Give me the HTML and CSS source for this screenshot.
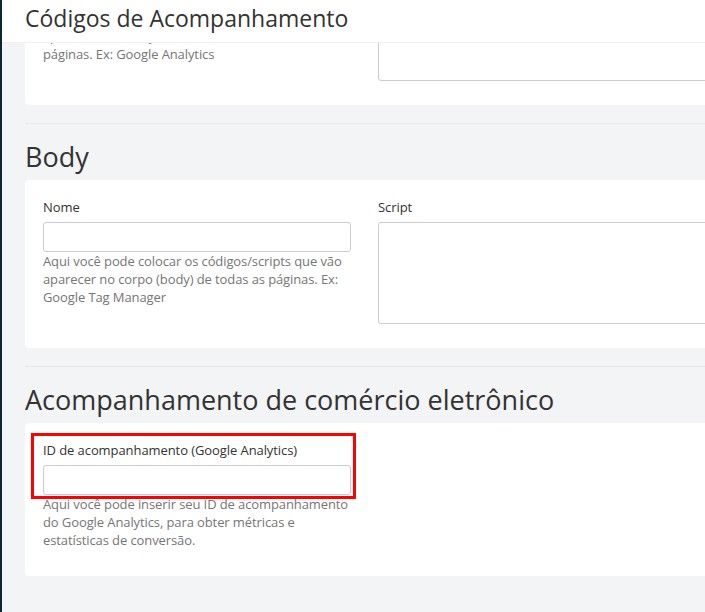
FILE: index.html
```html
<!DOCTYPE html>
<html lang="pt-BR">
<head>
<meta charset="utf-8">
<title>Códigos de Acompanhamento</title>
<link rel="stylesheet" href="styles.css">
</head>
<body>
<div class="layout">
  <aside class="sidebar"></aside>
  <main class="main">
    <header class="topbar">
      <h1 class="topbar-title">Códigos de Acompanhamento</h1>
    </header>
    <div class="content">
      <section class="card card-head">
        <div class="grid">
          <div class="field">
            <label class="label">Nome</label>
            <input class="input" type="text">
            <p class="help">Aqui você pode colocar os códigos/scripts que vão aparecer no cabeçalho (header) de todas as páginas. Ex: Google Analytics</p>
          </div>
          <div class="field">
            <label class="label">Script</label>
            <textarea class="textarea"></textarea>
          </div>
        </div>
      </section>

      <section class="section">
        <h2 class="section-title">Body</h2>
        <div class="card card-body">
          <div class="grid">
            <div class="field">
              <label class="label">Nome</label>
              <input class="input" type="text">
              <p class="help">Aqui você pode colocar os códigos/scripts que vão aparecer no corpo (body) de todas as páginas. Ex: Google Tag Manager</p>
            </div>
            <div class="field">
              <label class="label">Script</label>
              <textarea class="textarea"></textarea>
            </div>
          </div>
        </div>
      </section>

      <section class="section">
        <h2 class="section-title">Acompanhamento de comércio eletrônico</h2>
        <div class="card card-ecom">
          <div class="grid">
            <div class="field highlighted">
              <span class="highlight"></span>
              <label class="label">ID de acompanhamento (Google Analytics)</label>
              <input class="input" type="text">
              <p class="help">Aqui você pode inserir seu ID de acompanhamento do Google Analytics, para obter métricas e estatísticas de conversão.</p>
            </div>
          </div>
        </div>
      </section>
    </div>
  </main>
</div>
</body>
</html>
```
FILE: styles.css
```css
* { box-sizing: border-box; }
html, body {
  margin: 0;
  padding: 0;
  height: 100%;
  overflow: hidden;
}
body {
  font-family: "Open Sans", "Liberation Sans", sans-serif;
  color: #333;
  background: #f3f4f6;
}
.layout {
  display: flex;
  height: 612px;
}
.sidebar {
  width: 2px;
  flex: none;
  background: #0e2533;
}
.main {
  position: relative;
  flex: 1;
  overflow: hidden;
  background: #f3f4f6;
}
.topbar {
  position: absolute;
  top: 0;
  left: 0;
  right: 0;
  height: 43px;
  background: #fff;
  border-bottom: 1px solid #eef0f2;
  padding: 2px 23px 0;
  z-index: 2;
}
.topbar-title {
  margin: 0;
  font-size: 23px;
  line-height: 32px;
  font-weight: 400;
  color: #333;
}
.content {
  margin-top: -63px;
  padding-left: 23px;
}
.card {
  width: 760px;
  background: #fff;
  border-radius: 4px;
  padding: 18px 18px 24px;
}
.card-ecom { padding-bottom: 27px; }
.section {
  margin-top: 18px;
  border-top: 1px solid #e4e6e9;
}
.section-title {
  margin: 16px 0 6px;
  font-size: 27px;
  line-height: 34px;
  font-weight: 400;
  color: #333;
}
.grid {
  display: grid;
  grid-template-columns: 308px 1fr;
  column-gap: 27px;
  align-items: start;
}
.field {
  display: flex;
  flex-direction: column;
}
.highlighted { position: relative; }
.highlight {
  position: absolute;
  left: -12px;
  top: -8px;
  width: 325px;
  height: 66px;
  border: 3px solid #ff0000;
  z-index: 1;
  pointer-events: none;
}
.label {
  font-size: 13px;
  line-height: 18px;
  letter-spacing: -0.08px;
  margin-bottom: 6px;
  color: #333;
}
.input {
  display: block;
  width: 308px;
  height: 30px;
  border: 1px solid #cccccc;
  border-radius: 3px;
  background: #fff;
  margin: 0;
  font: inherit;
}
.textarea {
  display: block;
  width: 100%;
  height: 102px;
  border: 1px solid #cccccc;
  border-radius: 3px;
  background: #fff;
  margin: 0;
  resize: none;
  font: inherit;
}
.help {
  margin: 0;
  font-size: 13px;
  line-height: 18px;
  letter-spacing: -0.1px;
  color: #767676;
  width: 308px;
}
```
